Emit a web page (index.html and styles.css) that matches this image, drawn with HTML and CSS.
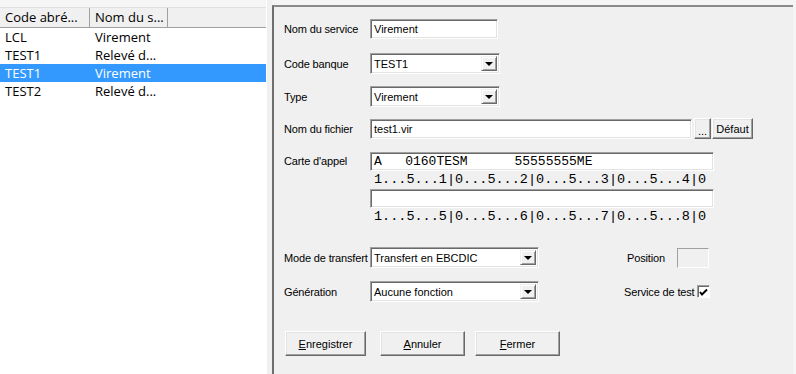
FILE: index.html
```html
<!DOCTYPE html>
<html lang="fr">
<head>
<meta charset="utf-8">
<title>Services</title>
<link rel="stylesheet" href="styles.css">
</head>
<body>
<div class="app">
  <div class="left">
    <div class="list">
      <div class="list-head">
        <div class="hcell c1">Code abré...</div>
        <div class="hcell c2">Nom du s...</div>
        <div class="hcell c3"></div>
      </div>
      <div class="list-body">
        <div class="lrow"><span class="c1">LCL</span><span class="c2">Virement</span></div>
        <div class="lrow"><span class="c1">TEST1</span><span class="c2">Relevé d...</span></div>
        <div class="lrow sel"><span class="c1">TEST1</span><span class="c2">Virement</span></div>
        <div class="lrow"><span class="c1">TEST2</span><span class="c2">Relevé d...</span></div>
      </div>
    </div>
  </div>
  <div class="splitter"></div>
  <div class="right">
    <div class="form">
      <div class="row r1">
        <label class="lbl">Nom du service</label>
        <div class="field w127">Virement</div>
      </div>
      <div class="row r2">
        <label class="lbl">Code banque</label>
        <div class="combo w129"><span class="val">TEST1</span><span class="drop"><i class="tri"></i></span></div>
      </div>
      <div class="row r3">
        <label class="lbl">Type</label>
        <div class="combo w129"><span class="val">Virement</span><span class="drop"><i class="tri"></i></span></div>
      </div>
      <div class="row r4">
        <label class="lbl">Nom du fichier</label>
        <div class="field w321">test1.vir</div>
        <button class="btn dots">...</button>
        <button class="btn defaut">Défaut</button>
      </div>
      <div class="row r5">
        <label class="lbl top">Carte d'appel</label>
        <div class="carte">
          <div class="field mono">A   0160TESM      55555555ME</div>
          <div class="ruler">1...5...1|0...5...2|0...5...3|0...5...4|0</div>
          <div class="field mono"></div>
          <div class="ruler">1...5...5|0...5...6|0...5...7|0...5...8|0</div>
        </div>
      </div>
      <div class="row r6">
        <label class="lbl">Mode de transfert</label>
        <div class="combo w168"><span class="val">Transfert en EBCDIC</span><span class="drop"><i class="tri"></i></span></div>
        <label class="lbl pos">Position</label>
        <div class="posbox"></div>
      </div>
      <div class="row r7">
        <label class="lbl">Génération</label>
        <div class="combo w168"><span class="val">Aucune fonction</span><span class="drop"><i class="tri"></i></span></div>
        <label class="lbl svc">Service de test</label>
        <div class="check"><svg width="9" height="9" viewBox="0 0 9 9"><path d="M1 4 L3 6.5 L8 1.5" fill="none" stroke="#000" stroke-width="2"/></svg></div>
      </div>
      <div class="row r8">
        <button class="btn big b1"><u>E</u>nregistrer</button>
        <button class="btn big b2"><u>A</u>nnuler</button>
        <button class="btn big b3"><u>F</u>ermer</button>
      </div>
    </div>
  </div>
</div>
</body>
</html>
```

FILE: styles.css
```css
html, body {
  margin: 0;
  padding: 0;
}
body {
  width: 796px;
  height: 374px;
  background: #f5f5f5;
  overflow: hidden;
}
.app {
  display: flex;
  height: 374px;
}
.left {
  width: 266px;
  padding-top: 7px;
  box-sizing: border-box;
}
.list {
  height: 367px;
  background: #fff;
  font-family: "Open Sans", "Noto Sans", sans-serif;
  font-size: 13px;
  color: #000;
}
.list-head {
  display: flex;
  height: 21px;
  border-top: 1px solid #e0e0e0;
  box-sizing: border-box;
  background: #f0f0f0;
}
.hcell {
  height: 20px;
  line-height: 19px;
  padding-left: 5px;
  box-sizing: border-box;
  border-right: 1px solid #a0a0a0;
  border-bottom: 1px solid #a0a0a0;
  background: #f0f0f0;
  white-space: nowrap;
}
.hcell.c1 { width: 90px; }
.hcell.c2 { width: 78px; }
.hcell.c3 { flex: 1; border-right: none; }
.lrow {
  display: flex;
  height: 18px;
  line-height: 18px;
  white-space: nowrap;
}
.lrow .c1 { width: 90px; padding-left: 5px; box-sizing: border-box; }
.lrow .c2 { padding-left: 5px; }
.lrow.sel {
  background: #3399ff;
  color: #fff;
}
.splitter {
  width: 5px;
  background: #f0f0f0;
  border-left: 1px solid #fff;
}
.right {
  width: 521px;
  margin-top: 5px;
  background: #f0f0f0;
  border-top: 2px solid #8a8a8a;
  border-left: 2px solid #6f6f6f;
  box-sizing: border-box;
  height: 369px;
}
.form {
  padding: 12px 0 0 10px;
  font-family: "Liberation Sans", Arial, sans-serif;
  font-size: 11px;
  color: #000;
}
.row {
  display: flex;
  align-items: center;
}
.lbl {
  width: 86px;
  flex: none;
  white-space: nowrap;
  letter-spacing: -0.15px;
}
.lbl.top {
  align-self: flex-start;
  padding-top: 3px;
}
.r1 { height: 20px; }
.r2 { margin-top: 14px; height: 21px; }
.r3 { margin-top: 12px; height: 21px; }
.r4 { margin-top: 11px; height: 21px; }
.r5 { margin-top: 13px; align-items: flex-start; }
.r6 { margin-top: 21px; height: 21px; }
.r7 { margin-top: 13px; height: 21px; }
.r8 { margin-top: 29px; padding-left: 1px; height: 25px; }

.field {
  height: 20px;
  box-sizing: border-box;
  background: #fff;
  border: 1px solid;
  border-color: #a0a0a0 #fff #fff #a0a0a0;
  box-shadow: inset 1px 1px 0 #696969, inset -1px -1px 0 #e3e3e3;
  padding: 2px 0 0 3px;
  line-height: 14px;
  white-space: pre;
}
.w127 { width: 128px; }
.w321 { width: 322px; }

.combo {
  height: 21px;
  box-sizing: border-box;
  background: #fff;
  border: 1px solid;
  border-color: #a0a0a0 #fff #fff #a0a0a0;
  box-shadow: inset 1px 1px 0 #696969, inset -1px -1px 0 #e3e3e3;
  display: flex;
  align-items: center;
  padding: 2px 2px 2px 3px;
}
.w129 { width: 130px; }
.w168 { width: 169px; }
.combo .val { flex: 1; white-space: nowrap; }
.drop {
  width: 16px;
  height: 15px;
  box-sizing: border-box;
  background: #f0f0f0;
  border: 1px solid;
  border-color: #f0f0f0 #696969 #696969 #f0f0f0;
  box-shadow: inset 1px 1px 0 #fff, inset -1px -1px 0 #a0a0a0;
  display: flex;
  align-items: center;
  justify-content: center;
}
.tri {
  width: 0;
  height: 0;
  border-left: 4px solid transparent;
  border-right: 4px solid transparent;
  border-top: 4px solid #000;
  margin-top: 1px;
}

.btn {
  font-family: "Liberation Sans", Arial, sans-serif;
  font-size: 11px;
  color: #000;
  background: #f0f0f0;
  border: 1px solid;
  border-color: #fff #696969 #696969 #fff;
  box-shadow: inset -1px -1px 0 #a0a0a0, inset 1px 1px 0 #e3e3e3;
  padding: 0;
  margin: 0;
  box-sizing: border-box;
}
.dots {
  width: 17px;
  height: 21px;
  margin-left: 2px;
  line-height: 14px;
  padding-top: 4px;
}
.defaut {
  width: 41px;
  height: 21px;
  margin-left: 1px;
}
.carte {
  width: 344px;
}
.field.mono {
  height: 19px;
  font-family: "Liberation Mono", "Courier New", monospace;
  font-size: 13px;
  padding: 1px 0 0 3px;
  line-height: 16px;
}
.ruler {
  height: 18px;
  line-height: 18px;
  padding-left: 4px;
  font-family: "Liberation Mono", "Courier New", monospace;
  font-size: 13.5px;
  white-space: pre;
}
.lbl.pos {
  width: auto;
  margin-left: 88px;
}
.posbox {
  width: 32px;
  height: 20px;
  margin-left: 12px;
  box-sizing: border-box;
  border: 1px solid;
  border-color: #a0a0a0 #fff #fff #a0a0a0;
  background: #f0f0f0;
}
.lbl.svc {
  width: auto;
  margin-left: 85px;
}
.check {
  width: 13px;
  height: 13px;
  margin-left: 2px;
  box-sizing: border-box;
  background: #fff;
  border: 1px solid;
  border-color: #a0a0a0 #fff #fff #a0a0a0;
  box-shadow: inset 1px 1px 0 #696969;
  display: flex;
  align-items: center;
  justify-content: center;
}
.check svg { display: block; margin: 1px 0 0 1px; }
.btn.big { height: 25px; }
.b1 { width: 81px; }
.b2 { width: 85px; margin-left: 14px; }
.b3 { width: 85px; margin-left: 10px; }
```
